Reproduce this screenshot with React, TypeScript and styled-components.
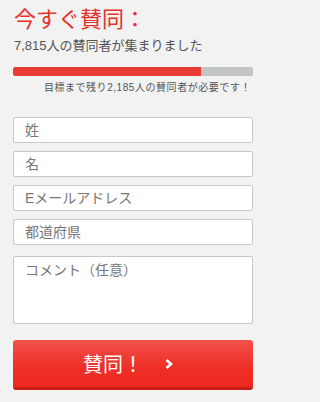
import styled, { createGlobalStyle } from "styled-components";

const GlobalStyle = createGlobalStyle`
  html, body {
    margin: 0;
    padding: 0;
    background: #f2f2f2;
  }
  body {
    font-family: "Liberation Sans", "Noto Sans CJK JP", sans-serif;
  }
  * {
    box-sizing: border-box;
  }
`;

const Page = styled.div`
  width: 263px;
  padding: 6px 10px 0 13px;
  display: flex;
  flex-direction: column;
`;

const Title = styled.h1`
  margin: 0;
  font-size: 22px;
  line-height: 28px;
  font-weight: normal;
  color: #e8302a;
  padding-left: 1px;
`;

const Count = styled.div`
  font-size: 13px;
  line-height: 18px;
  color: #555;
  margin-top: 3px;
  padding-left: 1px;
`;

const Bar = styled.div`
  margin-top: 12px;
  height: 9px;
  border-radius: 2px;
  background: #c2c5c5;
  overflow: hidden;
`;

const BarFill = styled.div`
  height: 100%;
  background: #e83b33;
  border-radius: 2px 0 0 2px;
`;

const Goal = styled.div`
  margin-top: 5px;
  font-size: 10px;
  line-height: 14px;
  color: #555;
  text-align: right;
  letter-spacing: 0.55px;
  padding-right: 2px;
`;

const Form = styled.form`
  margin-top: 22px;
  display: flex;
  flex-direction: column;
  gap: 8px;
`;

const Field = styled.input`
  height: 26px;
  border: 1px solid #c8c8c8;
  border-radius: 2px;
  background: #fff;
  padding: 0 11px;
  font-family: "Liberation Sans", "Noto Sans CJK JP", sans-serif;
  font-size: 14px;
  color: #666;
  outline: none;
  &::placeholder {
    color: #777;
  }
`;

const Comment = styled.textarea`
  margin-top: 3px;
  height: 68px;
  border: 1px solid #c8c8c8;
  border-radius: 2px;
  background: #fff;
  padding: 4px 11px;
  font-family: "Liberation Sans", "Noto Sans CJK JP", sans-serif;
  font-size: 14px;
  line-height: 18px;
  resize: none;
  outline: none;
  &::placeholder {
    color: #777;
  }
`;

const Submit = styled.button`
  margin-top: 8px;
  height: 50px;
  border: none;
  border-bottom: 3px solid #c81c16;
  border-radius: 3px;
  background: linear-gradient(#f1514b, #ee2e26 60%, #ec2820);
  color: #fff;
  font-family: "Liberation Sans", "Noto Sans CJK JP", sans-serif;
  font-size: 20px;
  display: flex;
  align-items: center;
  justify-content: center;
  padding: 0 10px 0 0;
  cursor: pointer;
`;

const Chevron = styled.svg`
  margin-left: 22px;
  width: 8px;
  height: 10px;
`;

export default function App() {
  const supporters = 7815;
  const goal = 10000;

  return (
    <Page>
      <GlobalStyle />
      <Title>今すぐ賛同：</Title>
      <Count>7,815人の賛同者が集まりました</Count>
      <Bar>
        <BarFill style={{ width: `${(supporters / goal) * 100}%` }} />
      </Bar>
      <Goal>目標まで残り2,185人の賛同者が必要です！</Goal>
      <Form onSubmit={(e) => e.preventDefault()}>
        <Field placeholder="姓" />
        <Field placeholder="名" />
        <Field placeholder="Eメールアドレス" />
        <Field placeholder="都道府県" />
        <Comment placeholder="コメント（任意）" />
        <Submit type="submit">
          賛同！
          <Chevron viewBox="0 0 8 10">
            <path d="M1.5 1 L6 5 L1.5 9" fill="none" stroke="#fff" strokeWidth="2.6" />
          </Chevron>
        </Submit>
      </Form>
    </Page>
  );
}
